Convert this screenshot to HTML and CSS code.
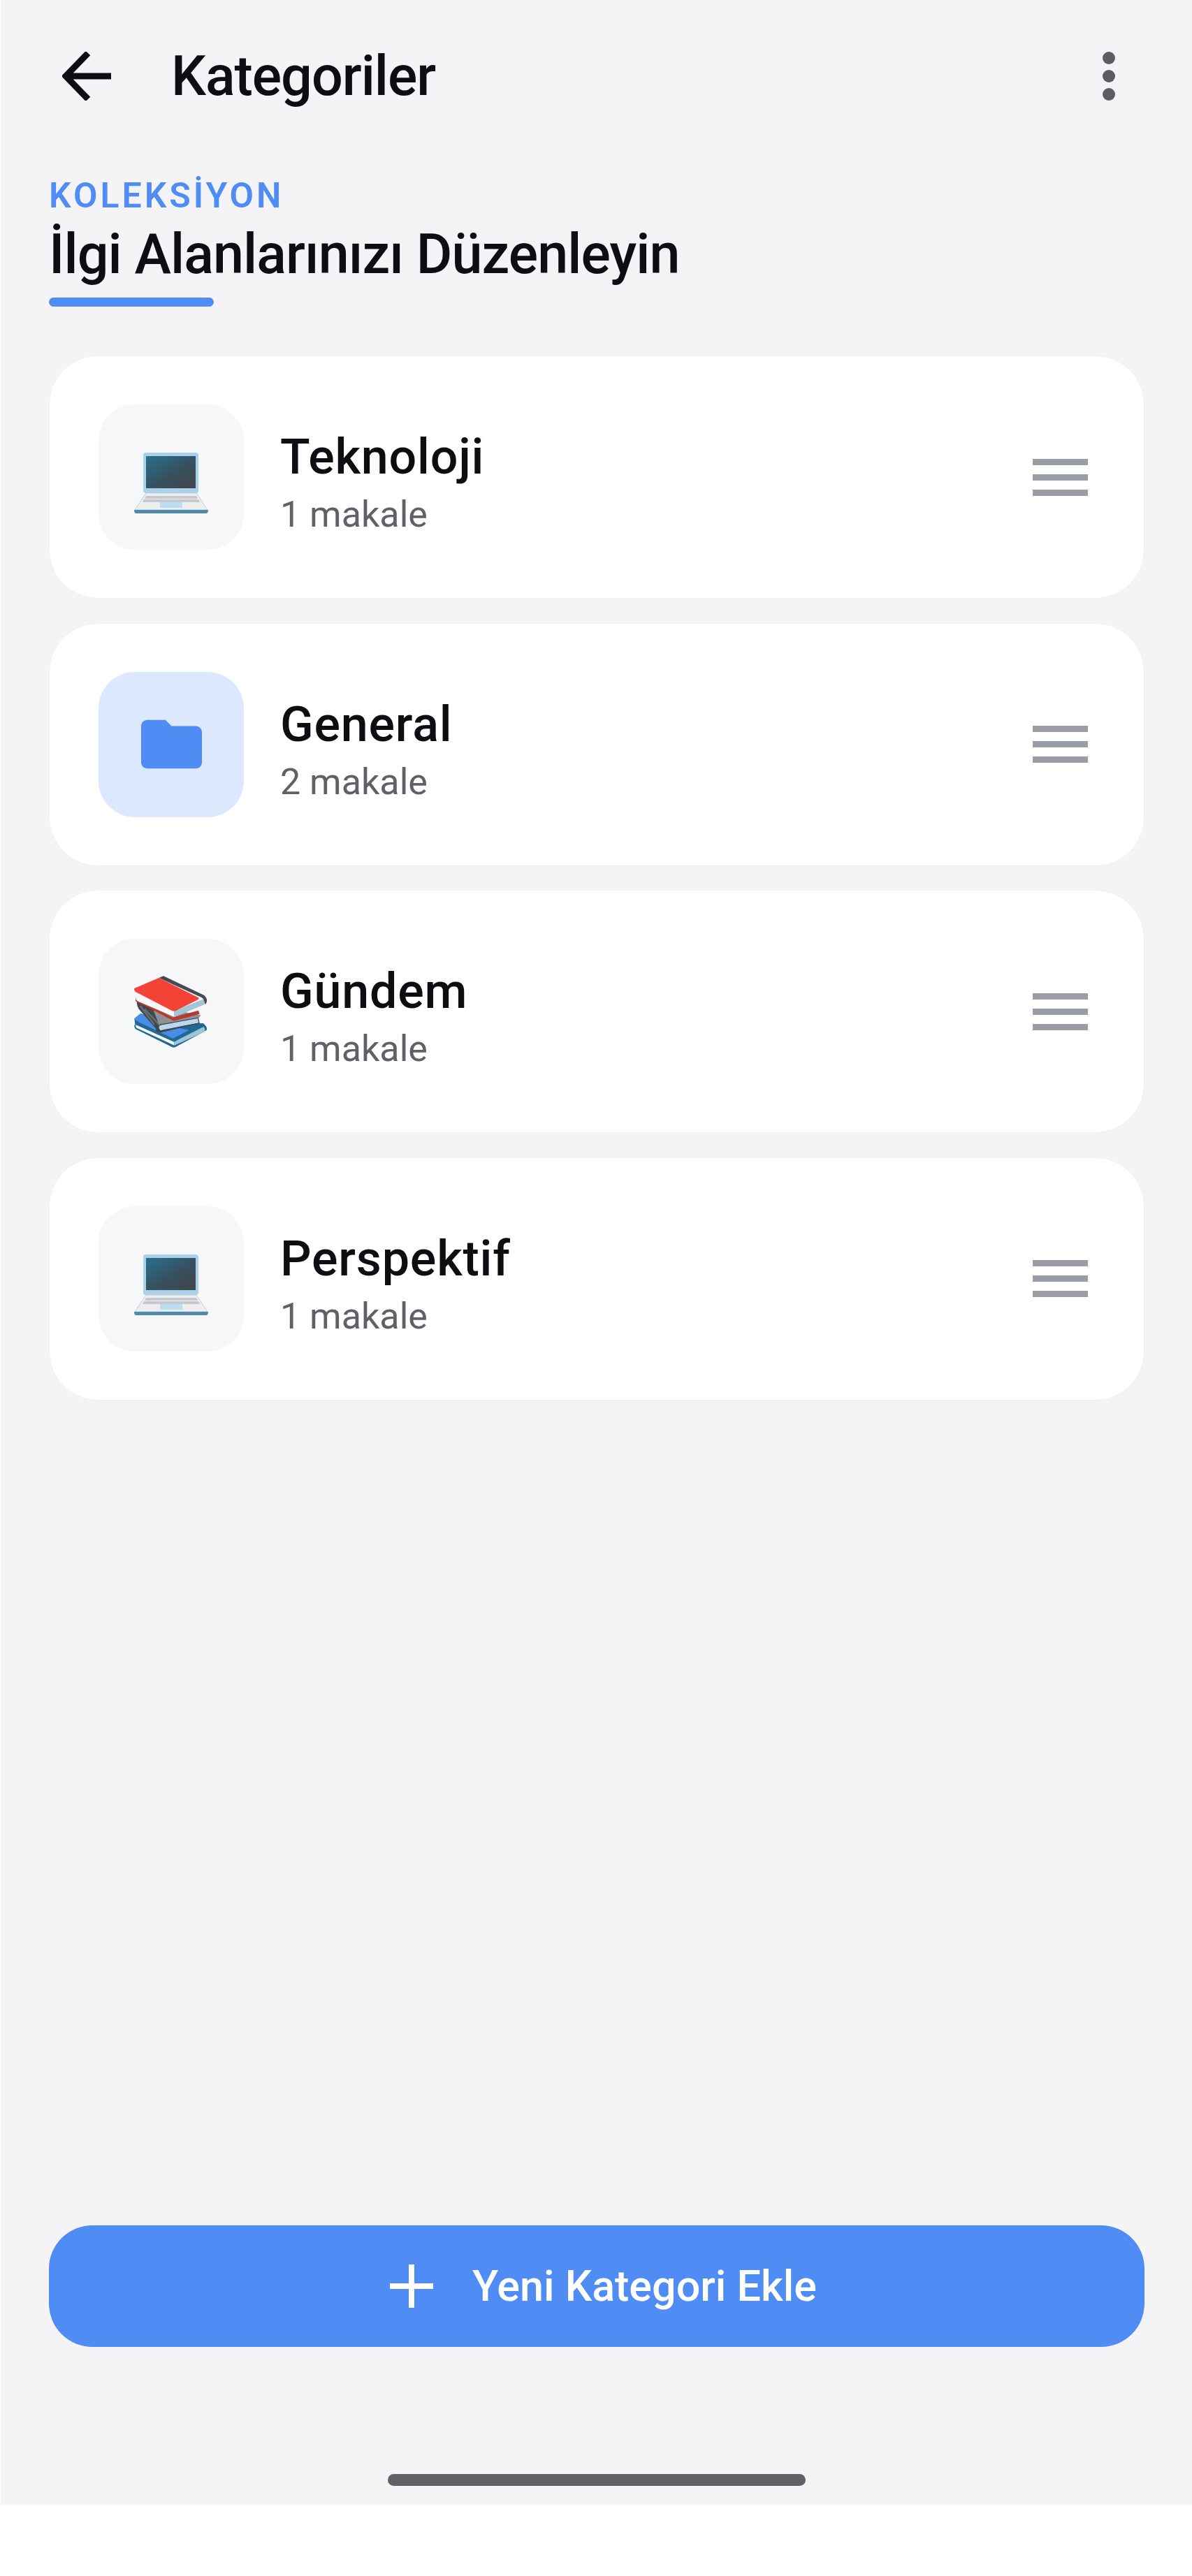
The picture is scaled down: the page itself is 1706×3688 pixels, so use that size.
FILE: index.html
```html
<!DOCTYPE html>
<html lang="tr">
<head>
  <meta charset="UTF-8">
  <title>Kategoriler</title>
  <link rel="stylesheet" href="styles.css">
</head>
<body>

<div class="screen">
  <header class="topbar">
    <svg class="back-icon" viewBox="0 0 70 70"><path d="M70 35H6M37 2 5 35l32 33" fill="none" stroke="#0d0d12" stroke-width="9"/></svg>
    <h1 class="page-title">Kategoriler</h1>
    <div class="more-dots"><span></span><span></span><span></span></div>
  </header>

  <section class="intro">
    <div class="eyebrow">KOLEKSİYON</div>
    <h2 class="intro-title">İlgi Alanlarınızı Düzenleyin</h2>
    <div class="intro-line"></div>
  </section>

  <div class="card-list">
    <div class="card">
      <div class="tile">
        <svg class="emoji laptop" viewBox="0 0 106 88">
          <use href="#laptop"/>
        </svg>
      </div>
      <div class="card-text">
        <div class="card-name">Teknoloji</div>
        <div class="card-count">1 makale</div>
      </div>
      <div class="drag"><span></span><span></span><span></span></div>
    </div>

    <div class="card">
      <div class="tile tile-blue">
        <svg class="folder" viewBox="2 4 20 16"><path d="M10 4H4c-1.100 0-2 .9-2 2v12c0 1.100.9 2 2 2h16c1.100 0 2-.9 2-2V8c0-1.100-.9-2-2-2h-8l-2-2z" fill="#4f8df5"/></svg>
      </div>
      <div class="card-text">
        <div class="card-name">General</div>
        <div class="card-count">2 makale</div>
      </div>
      <div class="drag"><span></span><span></span><span></span></div>
    </div>

    <div class="card">
      <div class="tile">
        <svg class="emoji books" viewBox="24 18 318 312">
          <path d="M25 205 55 183l75 42h190q20 15 15 30L200 328q-8 2-15-2L30 250q-10-15-2-20z" fill="#1f6a93"/>
          <path d="M25 205 50 183l80 42 130 30-70 35L35 215z" fill="#4a8de8"/>
          <path d="M32 232 195 305l2 15L35 245q-7-7-3-13z" fill="#f4f6f7"/>
          <path d="M195 305 322 240q10 10 3 22L197 320z" fill="#9fc3d4"/>
          <path d="M35 130 60 145l240 60 5 20-165 40q-20 3-25-20L45 165q-10-15-10-35z" fill="#43484f"/>
          <path d="M70 165l70 75M50 150l60 80" fill="none" stroke="#6b7075" stroke-width="7"/>
          <path d="M100 150 310 190l-10 15-170 25z" fill="#8d9296"/>
          <path d="M135 232 298 202l5 22-166 33q-15-12-2-25z" fill="#b9d8ee" stroke="#33373d" stroke-width="3"/>
          <path d="M30 115 190 200l110-30 5 15-110 30L30 130z" fill="#b93a2c"/>
          <path d="M32 112 195 172l2 26L38 130q-10-8-6-18z" fill="#f6f7f7"/>
          <path d="M195 172 325 120q10 20 0 25L197 198z" fill="#a2c5d5"/>
          <path d="M130 30 150 22 325 105q20 20 5 40l-8-23q-4-7-22-14z" fill="#454a51"/>
          <path d="M25 75 130 30 300 115q5 5-5 10l-90 45q-10 5-20 0L30 90q-8-8-5-15z" fill="#f44336"/>
        </svg>
      </div>
      <div class="card-text">
        <div class="card-name">Gündem</div>
        <div class="card-count">1 makale</div>
      </div>
      <div class="drag"><span></span><span></span><span></span></div>
    </div>

    <div class="card">
      <div class="tile">
        <svg class="emoji laptop" viewBox="0 0 106 88">
          <use href="#laptop"/>
        </svg>
      </div>
      <div class="card-text">
        <div class="card-name">Perspektif</div>
        <div class="card-count">1 makale</div>
      </div>
      <div class="drag"><span></span><span></span><span></span></div>
    </div>
  </div>

  <button class="add-btn">
    <svg class="plus-icon" viewBox="0 0 62 62"><path d="M31 0v62M0 31h62" stroke="#fff" stroke-width="8"/></svg>
    Yeni Kategori Ekle
  </button>

  <div class="home-bar"></div>
</div>

<svg class="defs" width="0" height="0">
  <defs>
    <linearGradient id="screen-glow" x1="0" y1="0" x2="1" y2="1">
      <stop offset="0" stop-color="#2a6f8e"/>
      <stop offset=".55" stop-color="#37505f"/>
      <stop offset="1" stop-color="#414549"/>
    </linearGradient>
    <g id="laptop">
      <rect x="13" y="0" width="79" height="58" rx="4" fill="#a9d1ea"/>
      <rect x="17" y="5" width="71" height="46" fill="url(#screen-glow)"/>
      <path d="M17 58h72l16 24H1z" fill="#eceef0" stroke="#c9ccd0" stroke-width="1"/>
      <path d="M17 62h72l2 4H15zM14 67h78l2 4H12z" fill="#c5c8cc"/>
      <rect x="37" y="71" width="32" height="8" fill="#bcdcf0"/>
      <path d="M0 82h106c0 3-1 5-3 5H3c-2 0-3-2-3-5z" fill="#4f8cab"/>
    </g>
  </defs>
</svg>

</body>
</html>
```

FILE: styles.css
```css
* {
  box-sizing: border-box;
}

html, body {
  margin: 0;
  background-color: #fff;
}

body {
  font-family: Roboto, "Noto Sans", sans-serif;
  color: #0d0d12;
}

.screen {
  width: 1705px;
  height: 3586px;
  margin-left: 1px;
  padding: 0 68px 0 69px;
  background-color: #f4f4f7;
  display: flex;
  flex-direction: column;
}

.topbar {
  display: flex;
  align-items: center;
  height: 218px;
  padding-left: 19px;
}

.back-icon {
  width: 70px;
  height: 70px;
  flex: none;
}

.page-title {
  margin: 0 0 0 86px;
  font-size: 79px;
  font-weight: 500;
  letter-spacing: -1px;
  flex: 1;
}

.more-dots {
  display: flex;
  flex-direction: column;
  gap: 8px;
  margin-right: 42px;
}

.more-dots span {
  width: 18px;
  height: 18px;
  border-radius: 50%;
  background-color: #5b5d63;
}

.intro {
  margin-top: 32px;
}

.eyebrow {
  font-size: 50px;
  font-weight: 600;
  letter-spacing: 4px;
  line-height: 60px;
  margin-bottom: 4px;
  color: #4f8df5;
}

.intro-title {
  margin: 0;
  font-size: 79px;
  font-weight: 500;
  letter-spacing: -0.9px;
  line-height: 100px;
}

.intro-line {
  width: 236px;
  height: 13px;
  margin-top: 12px;
  border-radius: 7px;
  background-color: #4f8df5;
}

.card-list {
  display: flex;
  flex-direction: column;
  gap: 34.5px;
  margin-top: 70px;
  flex: 1;
}

.card {
  display: flex;
  align-items: center;
  height: 348px;
  padding: 0 80px 0 70px;
  background-color: #fff;
  border: 1px solid #f2eff1;
  border-radius: 70px;
}

.tile {
  width: 208px;
  height: 208px;
  flex: none;
  border-radius: 52px;
  background-color: #f6f7f9;
  display: flex;
  align-items: center;
  justify-content: center;
}

.tile-blue {
  background-color: #dce8fd;
}

.emoji {
  width: 106px;
  height: 88px;
}

.laptop {
  margin-top: 18px;
}

.books {
  height: 104px;
}

.folder {
  width: 87px;
  height: 71px;
}

.card-text {
  flex: 1;
  margin-left: 52px;
  padding-top: 17px;
}

.card-name {
  font-size: 70px;
  font-weight: 500;
  letter-spacing: 0.8px;
  line-height: 84px;
  margin-bottom: 7px;
}

.card-count {
  font-size: 52px;
  line-height: 68px;
  color: #5f6168;
}

.drag {
  display: flex;
  flex-direction: column;
  gap: 13px;
}

.drag span {
  display: block;
  width: 79px;
  height: 9px;
  background-color: #9a9ca6;
}

.add-btn {
  display: flex;
  align-items: center;
  justify-content: center;
  gap: 56px;
  width: 100%;
  height: 174px;
  padding-left: 25px;
  border: none;
  border-radius: 62px;
  background-color: #4f8df5;
  color: #fff;
  font-family: inherit;
  font-size: 61px;
  font-weight: 500;
}

.plus-icon {
  width: 62px;
  height: 62px;
}

.home-bar {
  width: 598px;
  height: 17px;
  margin: 182px auto 27px;
  border-radius: 9px;
  background-color: #616165;
}

.defs {
  position: absolute;
}
```
